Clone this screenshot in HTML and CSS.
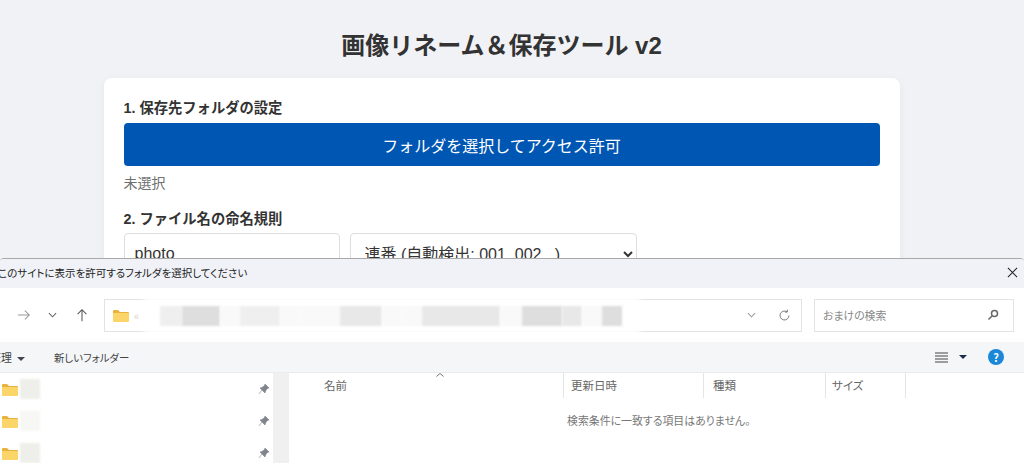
FILE: index.html
```html
<!DOCTYPE html>
<html lang="ja">
<head>
  <meta charset="UTF-8" />
  <title>画像リネーム＆保存ツール v2</title>
  <link rel="stylesheet" href="styles.css">
</head>
<body>
  <h1>画像リネーム＆保存ツール v2</h1>
  <div class="card">
    <label class="label">1. 保存先フォルダの設定</label>
    <button class="pick">フォルダを選択してアクセス許可</button>
    <p class="status">未選択</p>
    <label class="label">2. ファイル名の命名規則</label>
    <div class="naming">
      <input type="text" class="prefix" value="photo" />
      <select class="mode"><option>連番 (自動検出: 001, 002...)</option></select>
    </div>
  </div>

  <!-- folder picker dialog on top of the page -->
  <div class="dialog">
    <div class="titlebar">
      <span class="title">このサイトに表示を許可するフォルダを選択してください</span>
      <svg class="close" viewBox="0 0 12 12"><path d="M1 1l10 10M11 1L1 11" /></svg>
    </div>
    <div class="navbar">
      <svg class="nav forward" viewBox="0 0 16 16"><path d="M1 8h13M9 3l5 5-5 5" /></svg>
      <svg class="nav down" viewBox="0 0 10 6"><path d="M1 1l4 4 4-4" /></svg>
      <svg class="nav up" viewBox="0 0 16 16"><path d="M8 15V2M3 7l5-5 5 5" /></svg>
      <div class="address">
        <svg class="folder" viewBox="0 0 16 13"><path class="back" d="M0 2a1 1 0 0 1 1-1h4l2 2h8a1 1 0 0 1 1 1v1H0z" /><path class="front" d="M0 4h15a1 1 0 0 1 1 1v7a1 1 0 0 1-1 1H1a1 1 0 0 1-1-1z" /></svg>
        <span class="crumb">&laquo;</span>
        <div class="smear">
          <i class="px w22 g1"></i><i class="px w38 g3"></i><i class="px w20 g0"></i><i class="px w40 g1"></i><i class="px w20 g0"></i><i class="px w40 g0"></i><i class="px w42 g2"></i><i class="px w20 g0"></i><i class="px w20 g0"></i><i class="px w78 g2"></i><i class="px w22 g0"></i><i class="px w40 g3"></i><i class="px w20 g2"></i><i class="px w20 g0"></i><i class="px w20 g3"></i>
        </div>
        <svg class="nav addr-down" viewBox="0 0 10 6"><path d="M1 1l4 4 4-4" /></svg>
        <svg class="nav refresh" viewBox="0 0 16 16"><path d="M13.500 8A5.500 5.500 0 1 1 11 3.400M11.500 0.800v3h-3" /></svg>
      </div>
      <div class="search">
        <span>おまけの検索</span>
        <svg class="lens" viewBox="0 0 12 12"><circle cx="7.500" cy="4.500" r="3" /><path d="M5.200 6.800L1.500 10.500" /></svg>
      </div>
    </div>
    <div class="commands">
      <span class="organize">整理<b class="tri"></b></span>
      <span class="newfolder">新しいフォルダー</span>
      <svg class="viewicon" viewBox="0 0 13 11"><path d="M0 1h13M0 4h13M0 7h13M0 10h13" /></svg>
      <b class="tri dark"></b>
      <span class="help">?</span>
    </div>
    <div class="panes">
      <div class="tree">
        <div class="row">
          <svg class="folder" viewBox="0 0 16 13"><path class="back" d="M0 2a1 1 0 0 1 1-1h4l2 2h8a1 1 0 0 1 1 1v1H0z" /><path class="front" d="M0 4h15a1 1 0 0 1 1 1v7a1 1 0 0 1-1 1H1a1 1 0 0 1-1-1z" /></svg>
          <i class="blot"></i>
          <svg class="pin" viewBox="0 0 12 12"><path d="M7 1l4 4-1.500 .5L7.500 8 7 10 2 5l2-.5L6.500 2.500zM3.800 7.200L1 11" /></svg>
        </div>
        <div class="row">
          <svg class="folder" viewBox="0 0 16 13"><path class="back" d="M0 2a1 1 0 0 1 1-1h4l2 2h8a1 1 0 0 1 1 1v1H0z" /><path class="front" d="M0 4h15a1 1 0 0 1 1 1v7a1 1 0 0 1-1 1H1a1 1 0 0 1-1-1z" /></svg>
          <i class="blot light"></i>
          <svg class="pin" viewBox="0 0 12 12"><path d="M7 1l4 4-1.500 .5L7.500 8 7 10 2 5l2-.5L6.500 2.500zM3.800 7.200L1 11" /></svg>
        </div>
        <div class="row">
          <svg class="folder" viewBox="0 0 16 13"><path class="back" d="M0 2a1 1 0 0 1 1-1h4l2 2h8a1 1 0 0 1 1 1v1H0z" /><path class="front" d="M0 4h15a1 1 0 0 1 1 1v7a1 1 0 0 1-1 1H1a1 1 0 0 1-1-1z" /></svg>
          <i class="blot"></i>
          <svg class="pin" viewBox="0 0 12 12"><path d="M7 1l4 4-1.500 .5L7.500 8 7 10 2 5l2-.5L6.500 2.500zM3.800 7.200L1 11" /></svg>
        </div>
      </div>
      <div class="gutter"></div>
      <div class="list">
        <div class="head">
          <span class="col name">名前<svg class="caret" viewBox="0 0 8 4"><path d="M0.500 3.500L4 .5l3.500 3" /></svg></span>
          <span class="col date">更新日時</span>
          <span class="col kind">種類</span>
          <span class="col size">サイズ</span>
        </div>
        <p class="empty">検索条件に一致する項目はありません。</p>
      </div>
    </div>
  </div>
</body>
</html>
```

FILE: styles.css
```css
* {
  box-sizing: border-box;
}

html, body {
  height: 463px;
  overflow: hidden;
}

body {
  position: relative;
  margin: 0;
  padding-right: 21px;
  background: #f1f2f6;
  color: #333;
  font-family: "Liberation Sans", "Noto Sans CJK JP", sans-serif;
}

h1 {
  margin: 0;
  padding-top: 31px;
  height: 78px;
  font-size: 24px;
  line-height: 30px;
  text-align: center;
  color: #333;
}

.card {
  width: 796px;
  height: 400px;
  margin: 0 auto;
  padding: 20px;
  background: #fff;
  border-radius: 8px;
  box-shadow: 0 2px 8px rgba(0,0,0,0.05);
}

.label {
  display: block;
  font-size: 14.3px;
  line-height: 20px;
  font-weight: bold;
  margin-bottom: 5px;
}

.label + .naming {
  margin-top: -1px;
}

.pick {
  display: block;
  width: 100%;
  height: 43px;
  border: none;
  border-radius: 4px;
  background: #0056b3;
  color: #fff;
  font-family: inherit;
  font-size: 16px;
}

.status {
  margin: 8px 0 17px;
  font-size: 14px;
  line-height: 18px;
  color: #707070;
}

.naming {
  display: flex;
  gap: 10px;
}

.prefix {
  width: 216px;
  height: 42px;
  padding: 10px;
  border: 1px solid #ddd;
  border-radius: 4px;
  color: #333;
  font-family: inherit;
  font-size: 16px;
}

.mode {
  width: 287px;
  height: 42px;
  padding: 10px;
  border: 1px solid #ddd;
  border-radius: 4px;
  background: #fff;
  color: #333;
  font-family: inherit;
  font-size: 16px;
}

/* dialog */
.dialog {
  position: absolute;
  left: 0;
  top: 258px;
  width: 1024px;
  height: 205px;
  background: #fff;
  border-top: 1px solid #a8a8a8;
  border-radius: 4px 4px 0 0;
  font-family: "Noto Sans CJK JP", sans-serif;
  font-feature-settings: "palt";
  font-size: 10.9px;
  color: #555;
  overflow: hidden;
}

.titlebar {
  display: flex;
  align-items: center;
  justify-content: space-between;
  height: 29px;
  padding: 0 6px 3px 0;
  background: #f0f2f7;
}

.title {
  margin-left: -2px;
  color: #222;
  font-size: 10.5px;
}

.close {
  width: 11px;
  height: 11px;
  fill: none;
  stroke: #222;
  stroke-width: 1.1;
}

.navbar {
  display: flex;
  align-items: center;
  height: 54px;
  padding: 0 10px 0 17px;
  background: #fff;
  overflow: hidden;
}

.nav {
  flex: none;
  fill: none;
  stroke: #999;
  stroke-width: 1.2;
}

.forward {
  width: 14px;
  height: 14px;
}

.down {
  width: 9px;
  height: 6px;
  margin-left: 17px;
  stroke: #666;
}

.up {
  width: 14px;
  height: 14px;
  margin-left: 18px;
  stroke: #555;
}

.address {
  position: relative;
  display: flex;
  align-items: center;
  width: 698px;
  height: 33px;
  margin-left: 15px;
  padding: 0 10px 0 8px;
  border: 1px solid #e3e3e3;
}

.folder {
  flex: none;
  width: 16px;
  height: 13px;
}

.folder .back {
  fill: #e8b33c;
}

.folder .front {
  fill: #fbd568;
}

.crumb {
  margin-left: 5px;
  color: #d8cfb8;
}

.smear {
  position: absolute;
  left: 42px;
  top: -10px;
  width: 490px;
  height: 53px;
  display: flex;
  align-items: center;
  padding-left: 13px;
  background: rgba(255,255,255,0.8);
  box-shadow: 0 0 6px 3px rgba(255,255,255,0.8);
}

.px {
  display: block;
  height: 20px;
  flex: none;
  filter: blur(1px);
}

.w20 { width: 20px; }
.w22 { width: 22px; }
.w38 { width: 38px; }
.w40 { width: 40px; }
.w42 { width: 42px; }
.w78 { width: 78px; }

.g0 { background: #f9f9f9; }
.g1 { background: #efefef; }
.g2 { background: #e8e8e8; }
.g3 { background: #dedede; }

.addr-down {
  width: 9px;
  height: 6px;
  margin-left: auto;
  margin-right: 22px;
}

.refresh {
  width: 13px;
  height: 13px;
  stroke: #777;
}

.search {
  display: flex;
  align-items: center;
  justify-content: space-between;
  width: 200px;
  height: 33px;
  margin-left: 12px;
  padding: 0 14px 0 8px;
  border: 1px solid #e3e3e3;
  color: #888;
}

.lens {
  width: 12px;
  height: 12px;
  fill: none;
  stroke: #666;
  stroke-width: 1.5;
}

.commands {
  display: flex;
  align-items: center;
  height: 31px;
  background: #f4f6f8;
  border-bottom: 1px solid #e9ebee;
  color: #444;
}

.organize {
  width: 54px;
  margin-left: -10px;
  margin-right: 10px;
}

.newfolder {
  font-size: 10.4px;
}

.tri {
  display: inline-block;
  width: 0;
  height: 0;
  margin-left: 5px;
  vertical-align: middle;
  border: 4px solid transparent;
  border-top: 4px solid #445;
  border-bottom: 0;
}

.viewicon {
  width: 13px;
  height: 11px;
  margin-left: auto;
  fill: none;
  stroke: #444;
}

.tri.dark {
  margin-left: 11px;
  border-top-color: #1d2b4a;
}

.help {
  width: 16px;
  height: 16px;
  margin: 0 20px 0 21px;
  border-radius: 50%;
  background: #1a87d8;
  color: #fff;
  font-size: 11px;
  font-weight: bold;
  line-height: 16px;
  text-align: center;
}

.panes {
  display: flex;
  height: 90px;
}

.tree {
  flex: none;
  width: 273px;
}

.row {
  display: flex;
  align-items: center;
  height: 32px;
  padding: 0 3px 0 2px;
}

.blot {
  width: 20px;
  height: 20px;
  margin-left: 2px;
  background: #eeeeea;
  filter: blur(1px);
}

.blot.light {
  background: #f7f7f5;
}

.pin {
  width: 12px;
  height: 12px;
  margin-left: auto;
  fill: #7f858c;
  stroke: #7f858c;
  stroke-width: 0.6;
}

.gutter {
  flex: none;
  width: 16px;
  background: #f0f0f0;
}

.list {
  flex: 1;
}

.head {
  display: flex;
  height: 25px;
}

.col {
  position: relative;
  display: block;
  padding-top: 4px;
  border-right: 1px solid #e5e5e5;
  color: #666;
  font-size: 11.5px;
}

.name {
  width: 275px;
  padding-left: 35px;
}

.date {
  width: 140px;
  padding-left: 7px;
}

.kind {
  width: 122px;
  padding-left: 9px;
}

.size {
  width: 80px;
  padding-left: 6px;
}

.caret {
  position: absolute;
  left: 147px;
  top: 0;
  width: 8px;
  height: 4px;
  fill: none;
  stroke: #777;
}

.empty {
  margin: 14px 0 0 278px;
  color: #777;
}
```
